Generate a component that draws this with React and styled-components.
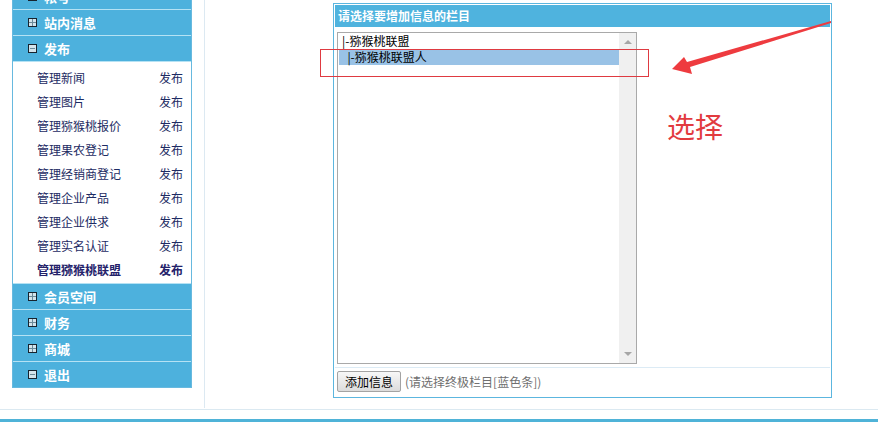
import styled, { createGlobalStyle } from 'styled-components';

const GlobalStyle = createGlobalStyle`
  html, body {
    margin: 0;
    padding: 0;
    background: #fff;
    overflow: hidden;
  }
  body {
    font-family: "Noto Sans CJK SC", "Liberation Sans", sans-serif;
    font-size: 12px;
  }
`;

const menuTop = [
  { label: '帐号', open: false },
  { label: '站内消息', open: false },
  { label: '发布', open: true },
];

const menuBottom = [
  { label: '会员空间', open: false },
  { label: '财务', open: false },
  { label: '商城', open: false },
  { label: '退出', open: true },
];

const items = [
  '管理新闻',
  '管理图片',
  '管理猕猴桃报价',
  '管理果农登记',
  '管理经销商登记',
  '管理企业产品',
  '管理企业供求',
  '管理实名认证',
  '管理猕猴桃联盟',
];

const BoxIcon = ({ open }) => (
  <svg width="9" height="9" viewBox="0 0 9 9">
    <rect x="0.5" y="0.5" width="8" height="8" fill="#d3e4ec" stroke="#17232e" />
    {open ? (
      <line x1="2" y1="4.5" x2="7" y2="4.5" stroke="#6b8a99" />
    ) : (
      <>
        <line x1="4.5" y1="1" x2="4.5" y2="8" stroke="#6b8a99" />
        <line x1="1" y1="4.5" x2="8" y2="4.5" stroke="#6b8a99" />
      </>
    )}
  </svg>
);

const App = () => {
  return (
    <Page>
      <GlobalStyle />
      <MainRow>
        <SideCol>
          <Sidebar>
            {menuTop.map((m) => (
              <MenuHead key={m.label}>
                <BoxIcon open={m.open} />
                <span>{m.label}</span>
              </MenuHead>
            ))}
            <ItemList>
              {items.map((it, i) => (
                <Item key={it} $active={i === items.length - 1}>
                  <span>{it}</span>
                  <span>发布</span>
                </Item>
              ))}
            </ItemList>
            {menuBottom.map((m) => (
              <MenuHead key={m.label}>
                <BoxIcon open={m.open} />
                <span>{m.label}</span>
              </MenuHead>
            ))}
          </Sidebar>
        </SideCol>
        <Content>
          <Panel>
            <PanelTitle>请选择要增加信息的栏目</PanelTitle>
            <PanelBody>
              <ListBox>
                <Options>
                  <Option>|-猕猴桃联盟</Option>
                  <Option $selected>&nbsp;&nbsp;|-猕猴桃联盟人</Option>
                </Options>
                <ScrollBar>
                  <Arrow $up />
                  <Arrow />
                </ScrollBar>
              </ListBox>
            </PanelBody>
            <ButtonRow>
              <Button>添加信息</Button>
              <Hint>(请选择终极栏目[蓝色条])</Hint>
            </ButtonRow>
          </Panel>
        </Content>
      </MainRow>
      <FootLine />
      <FootBar />

      <Mark />
      <Annotation width="878" height="422" viewBox="0 0 878 422">
        <polygon
          points="672,69 684,57 687,62 831,21 831,23 690,67 692,74"
          fill="#ee3b3f"
        />
      </Annotation>
      <Note>选择</Note>
    </Page>
  );
};

const Page = styled.div`
  position: relative;
  width: 878px;
  height: 422px;
  overflow: hidden;
`;

const MainRow = styled.div`
  display: flex;
  height: 408px;
`;

const SideCol = styled.div`
  width: 192px;
  padding-left: 12px;
  border-right: 1px solid #dce9f2;
`;

const Sidebar = styled.div`
  width: 178px;
  margin-top: -17px;
  border: 1px solid #67b9df;
  background: #fff;
`;

const MenuHead = styled.div`
  display: flex;
  align-items: center;
  gap: 7px;
  height: 25px;
  padding-left: 15px;
  background: #4db1dd;
  border-bottom: 1px solid #b5e2f4;
  color: #fff;
  font-weight: bold;
  font-size: 13px;

  &:last-child {
    border-bottom: none;
  }
`;

const ItemList = styled.div`
  padding: 3px 0 2px;
  border-bottom: 1px solid #b5e2f4;
`;

const Item = styled.div`
  display: flex;
  justify-content: space-between;
  align-items: center;
  height: 24px;
  padding: 0 8px 0 24px;
  color: ${(p) => (p.$active ? '#24226a' : '#1d2b63')};
  font-weight: ${(p) => (p.$active ? 'bold' : 'normal')};
  font-size: 12px;
`;

const Content = styled.div`
  flex: 1;
  padding: 3px 0 0 128px;
`;

const Panel = styled.div`
  width: 495px;
  padding: 1px;
  border: 1px solid #5cb6df;
`;

const PanelTitle = styled.div`
  height: 22px;
  line-height: 22px;
  padding-left: 3px;
  background: #4fb3de;
  color: #fff;
  font-weight: bold;
  font-size: 12px;
`;

const PanelBody = styled.div`
  padding: 5px 0 3px 2px;
  border-bottom: 1px solid #dcebf5;
`;

const ListBox = styled.div`
  display: flex;
  width: 298px;
  height: 330px;
  border: 1px solid #a9a9a9;
`;

const Options = styled.div`
  flex: 1;
`;

const Option = styled.div`
  height: 16px;
  line-height: 16px;
  padding-left: 3px;
  margin-left: 1px;
  color: #000;
  font-size: 12px;
  white-space: nowrap;
  background: ${(p) => (p.$selected ? '#99c2e6' : 'transparent')};
`;

const ScrollBar = styled.div`
  width: 17px;
  display: flex;
  flex-direction: column;
  justify-content: space-between;
  align-items: center;
  padding: 7px 0;
  background: #f0f0f0;
`;

const Arrow = styled.div`
  width: 0;
  height: 0;
  border-left: 4px solid transparent;
  border-right: 4px solid transparent;
  ${(p) =>
    p.$up
      ? 'border-bottom: 4px solid #a6a6a6;'
      : 'border-top: 4px solid #a6a6a6;'}
`;

const ButtonRow = styled.div`
  display: flex;
  align-items: center;
  gap: 4px;
  padding: 3px 0 4px 2px;
`;

const Button = styled.button`
  height: 21px;
  padding: 0 7px;
  border: 1px solid #a3a3a3;
  border-radius: 2px;
  background: linear-gradient(#f7f7f7, #dcdcdc);
  color: #000;
  font-family: inherit;
  font-size: 12px;
  line-height: 19px;
`;

const Hint = styled.span`
  color: #707070;
  font-size: 12px;
`;

const FootLine = styled.div`
  margin-top: 1px;
  border-top: 1px solid #dbe9f1;
`;

const FootBar = styled.div`
  margin-top: 9px;
  height: 6px;
  background: #4fb3d8;
`;

const Mark = styled.div`
  position: absolute;
  left: 320px;
  top: 49px;
  width: 327px;
  height: 26px;
  border: 1px solid #df3a41;
`;

const Annotation = styled.svg`
  position: absolute;
  left: 0;
  top: 0;
  pointer-events: none;
`;

const Note = styled.div`
  position: absolute;
  left: 667px;
  top: 108px;
  color: #e23b3f;
  font-size: 28px;
  line-height: 36px;
`;

export default App;
